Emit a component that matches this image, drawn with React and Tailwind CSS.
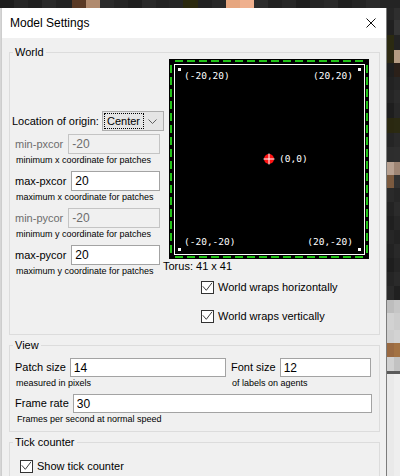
import React from "react";

const topBlocks = [
  [14, "#1d1d1d"], [14, "#262626"], [14, "#202020"], [14, "#2a2a2a"], [16, "#232323"],
  [14, "#5a3a26"], [14, "#b08a6e"], [14, "#2b2b2b"], [14, "#252525"], [14, "#1f1f1f"],
  [14, "#292929"], [13, "#232323"], [14, "#262626"], [15, "#2b290f"], [14, "#222222"],
  [14, "#282828"], [14, "#e6a67f"], [14, "#efb08e"], [14, "#2c2c2c"], [14, "#222222"],
  [14, "#272727"], [14, "#1e1e1e"], [14, "#262626"], [14, "#2a2a2a"], [14, "#202020"],
  [14, "#252525"], [14, "#2b2b2b"], [20, "#242424"],
];

const sideBlocks = [
  [12, "#262626", "#2e2e2e"], [15, "#202020", "#343434"], [15, "#2b2a11", "#232323"],
  [13, "#2e2a13", "#b69c83"], [14, "#1f1f1f", "#2b2019"], [13, "#222222", "#262626"],
  [13, "#252525", "#2b2b2b"], [15, "#1e1e1e", "#282828"], [15, "#2a2810", "#2b2a12"],
  [14, "#252525", "#2a2a2a"], [15, "#2d2d2d", "#2e2e2e"], [13, "#b8a191", "#9e8574"],
  [13, "#7b5a3f", "#323232"], [14, "#2a2a2a", "#262626"], [14, "#232323", "#2b2b2b"],
  [14, "#1f1f1f", "#262626"], [14, "#262626", "#222222"], [14, "#222222", "#292929"],
  [14, "#1e1e1e", "#252525"], [14, "#252525", "#2a2a2a"], [14, "#2a2a2a", "#202020"],
  [13, "#bdbdbd", "#c6c6c6"], [17, "#d2d2d2", "#cdcdcd"], [13, "#cecece", "#d3d3d3"],
  [14, "#9a6a42", "#a37243"], [14, "#d1d1d1", "#c2c2c2"], [3, "#5a5a5a", "#5a5a5a"],
  [102, "#e9e9e9", "#eeeeee"],
];

const Field = ({ label, value, help, disabled }) => (
  <div className="mb-[5px]">
    <div className="flex h-[20px] items-center gap-[5px] pl-[5px] pr-[4px]">
      <span className={disabled ? "text-[#6d6d6d]" : "text-black"}>{label}</span>
      <input
        defaultValue={value}
        disabled={disabled}
        className={
          disabled
            ? "h-[20px] w-0 min-w-0 flex-1 border border-[#c4c4c4] bg-[#f0f0f0] pl-[3px] text-[12px] text-[#6d6d6d] outline-none"
            : "h-[20px] w-0 min-w-0 flex-1 border border-[#a3a3a3] bg-white pl-[3px] text-[12px] text-black outline-none"
        }
      />
    </div>
    <div className="h-[12px] pl-[6px] text-[9px] leading-[12px]">{help}</div>
  </div>
);

const Check = ({ label }) => (
  <div className="flex h-[16px] items-center gap-[4px]">
    <span className="flex h-[13px] w-[13px] items-center justify-center border border-[#333333] bg-white">
      <svg width="11" height="11" viewBox="0 0 11 11">
        <path d="M0.8 4.3 L4.3 8.3 L10 0.8" fill="none" stroke="#3c3c3c" strokeWidth="1" />
      </svg>
    </span>
    <span className="leading-[16px]">{label}</span>
  </div>
);

const TextRow = ({ label, value }) => (
  <div className="flex h-[19px] min-w-0 flex-1 items-center gap-[4px]">
    <span className="shrink-0">{label}</span>
    <input
      defaultValue={value}
      className="h-[19px] w-0 min-w-0 flex-1 border border-[#a3a3a3] bg-white pl-[3px] text-[12px] text-black outline-none"
    />
  </div>
);

const WorldView = () => {
  const label = "absolute font-[DejaVu_Sans_Mono,monospace] text-[9.5px] leading-[12px] text-white whitespace-nowrap";
  return (
    <div className="relative h-[200px] w-[200px]">
      <svg width="200" height="200" viewBox="0 0 200 200" className="block">
        <rect x="0" y="0" width="200" height="200" fill="#000" />
        <g stroke="#22c418" strokeWidth="2" strokeDasharray="8 4">
          <line x1="2" y1="6" x2="2" y2="196" />
          <line x1="198" y1="6" x2="198" y2="196" />
          <line x1="6" y1="2" x2="196" y2="2" />
          <line x1="6" y1="198" x2="196" y2="198" />
        </g>
        <rect x="5.5" y="5.5" width="190" height="190" fill="none" stroke="#fff" strokeWidth="1" />
        <g fill="#fff">
          <rect x="9" y="9" width="3" height="3" />
          <rect x="189" y="9" width="3" height="3" />
          <rect x="9" y="189" width="3" height="3" />
          <rect x="189" y="189" width="3" height="3" />
        </g>
        <circle cx="100" cy="100" r="5" fill="#ff1414" />
        <line x1="94.5" y1="100" x2="105.5" y2="100" stroke="#fff" strokeWidth="1" />
        <line x1="100" y1="94.5" x2="100" y2="105.5" stroke="#fff" strokeWidth="1" />
      </svg>
      <span className={`${label} left-[15px] top-[11px]`}>(-20,20)</span>
      <span className={`${label} right-[16px] top-[11px]`}>(20,20)</span>
      <span className={`${label} left-[110px] top-[94px]`}>(0,0)</span>
      <span className={`${label} left-[15px] top-[177px]`}>(-20,-20)</span>
      <span className={`${label} right-[16px] top-[177px]`}>(20,-20)</span>
    </div>
  );
};

export default function App() {
  return (
    <div className="h-[476px] w-[400px] overflow-hidden bg-[#222222] font-[Liberation_Sans,Arial,sans-serif] text-[11px] text-black">
      <div className="flex h-[8px]">
        {topBlocks.map(([w, c], i) => (
          <div key={i} className="h-full" style={{ width: w, background: c }} />
        ))}
      </div>
      <div className="flex h-[468px]">
        <div className="w-[1px] bg-[#d6d6d6]" />
        <div className="flex w-[386px] flex-col overflow-hidden border-l border-r border-l-[#cdcdcd] border-r-[#7c7c7c] bg-[#f0f0f0]">
          <div className="flex h-[30px] shrink-0 items-center justify-between bg-white pl-[8px] pr-[10px]">
            <span className="text-[12px]">Model Settings</span>
            <svg width="10" height="10" viewBox="0 0 10 10">
              <path d="M0.5 0.5 L9.5 9.5 M9.5 0.5 L0.5 9.5" stroke="#111" strokeWidth="1" />
            </svg>
          </div>
          <div className="flex shrink-0 flex-col pl-[7px] pt-[7px]">
            <fieldset className="w-[371px] shrink-0 border border-[#dcdcdc]">
              <legend className="ml-[3px] px-[2px] leading-[14px]">World</legend>
              <div className="flex pb-[10px]">
                <div className="flex w-[154px] flex-col pt-[52px]">
                  <div className="flex h-[20px] items-center justify-between pl-[2px]">
                    <span>Location of origin:</span>
                    <div className="flex h-[20px] w-[62px] items-center border border-[#adadad] bg-[#e5e5e5] pl-[1px]">
                      <span className="h-[16px] w-[40px] border border-dotted border-black pl-[2px] leading-[14px]">
                        Center
                      </span>
                      <svg width="9" height="5" viewBox="0 0 9 5" className="ml-[4px]">
                        <path d="M0.5 0.5 L4.5 4.5 L8.5 0.5" fill="none" stroke="#606060" strokeWidth="1" />
                      </svg>
                    </div>
                  </div>
                  <div className="mt-[3px]">
                    <Field label="min-pxcor" value="-20" help="minimum x coordinate for patches" disabled />
                    <Field label="max-pxcor" value="20" help="maximum x coordinate for patches" />
                    <Field label="min-pycor" value="-20" help="minimum y coordinate for patches" disabled />
                    <Field label="max-pycor" value="20" help="maximum y coordinate for patches" />
                  </div>
                </div>
                <div className="flex flex-col">
                  <div className="ml-[5px]">
                    <WorldView />
                  </div>
                  <div className="ml-[-1px] leading-[14px]">Torus: 41 x 41</div>
                  <div className="ml-[37px] mt-[6px]">
                    <Check label="World wraps horizontally" />
                  </div>
                  <div className="ml-[37px] mt-[13px]">
                    <Check label="World wraps vertically" />
                  </div>
                </div>
              </div>
            </fieldset>

            <fieldset className="mt-[3px] w-[371px] shrink-0 border border-[#dcdcdc]">
              <legend className="ml-[3px] px-[2px] leading-[14px]">View</legend>
              <div className="flex flex-col pb-[6px] pt-[6px]">
                <div className="flex">
                  <div className="flex w-[216px] pl-[5px]">
                    <TextRow label="Patch size" value="14" />
                  </div>
                  <div className="flex w-[145px] pl-[5px]">
                    <TextRow label="Font size" value="12" />
                  </div>
                </div>
                <div className="flex h-[12px] text-[9px] leading-[12px]">
                  <div className="w-[216px] pl-[6px]">measured in pixels</div>
                  <div className="pl-[6px]">of labels on agents</div>
                </div>
                <div className="mt-[5px] flex pl-[5px] pr-[7px]">
                  <TextRow label="Frame rate" value="30" />
                </div>
                <div className="h-[12px] pl-[7px] text-[9px] leading-[12px]">
                  Frames per second at normal speed
                </div>
              </div>
            </fieldset>

            <fieldset className="mt-[3px] h-[60px] w-[371px] shrink-0 border border-[#dcdcdc]">
              <legend className="ml-[3px] px-[2px] leading-[14px]">Tick counter</legend>
              <div className="pl-[10px] pt-[9px]">
                <Check label="Show tick counter" />
              </div>
            </fieldset>
          </div>
        </div>
        <div className="flex w-[13px] flex-col">
          {sideBlocks.map(([h, l, r], i) => (
            <div key={i} className="flex" style={{ height: h }}>
              <div className="w-[7px]" style={{ background: l }} />
              <div className="w-[6px]" style={{ background: r }} />
            </div>
          ))}
        </div>
      </div>
    </div>
  );
}
